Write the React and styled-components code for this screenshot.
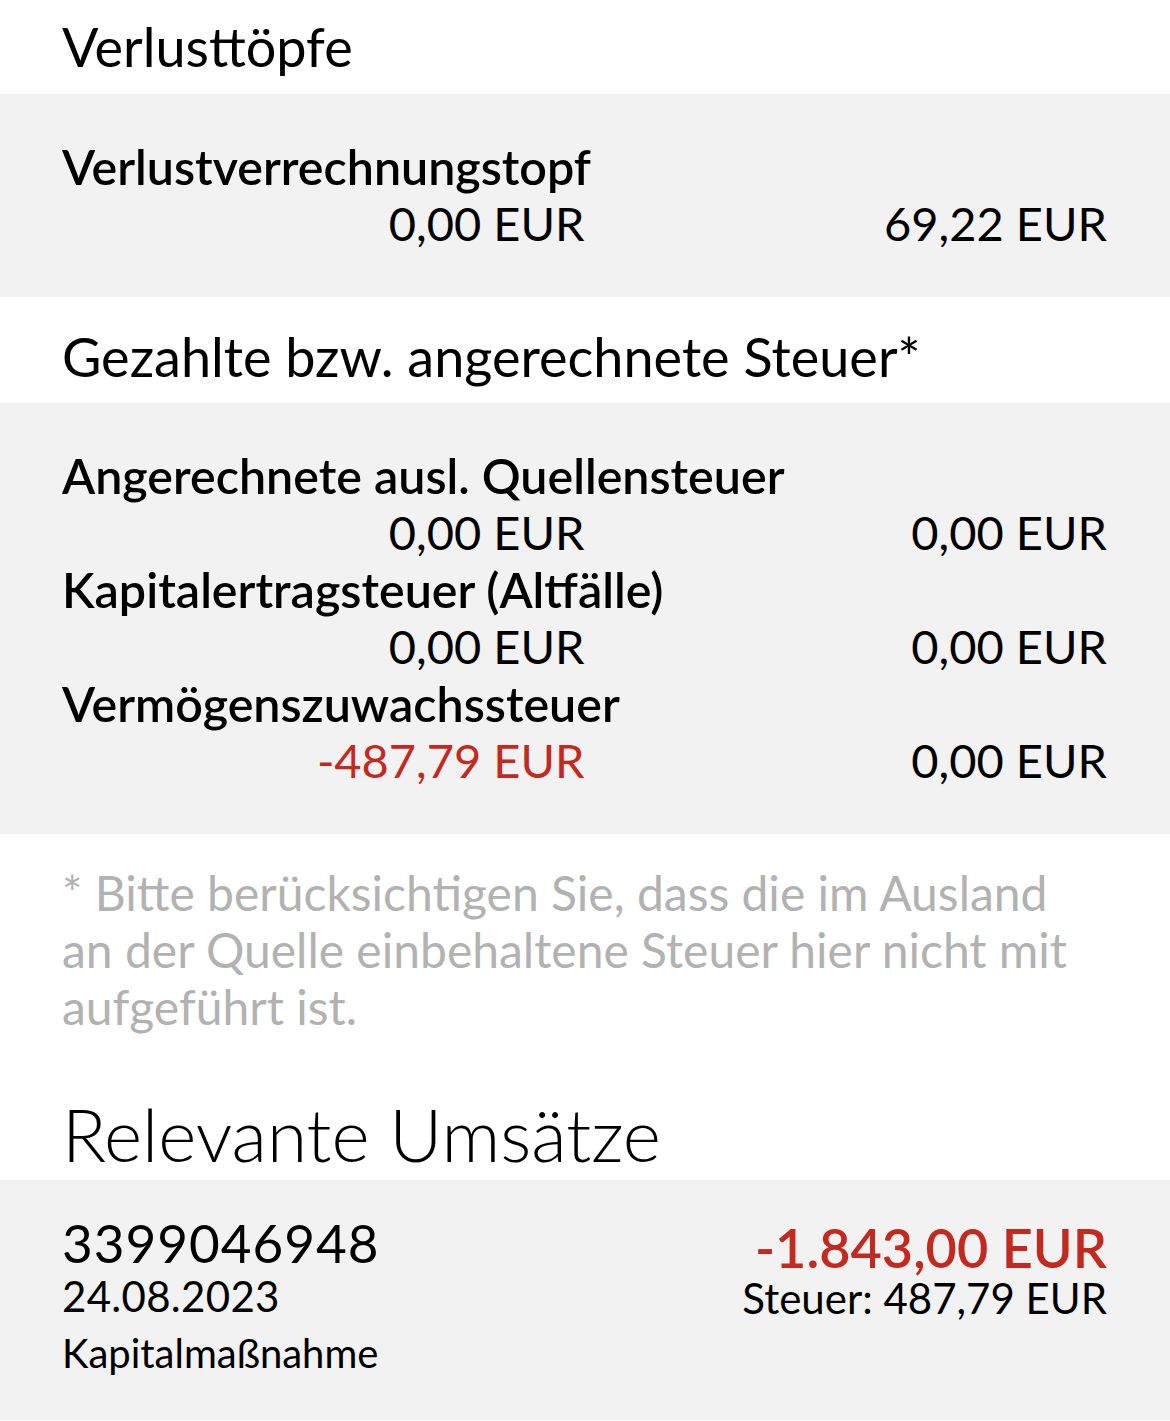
import React from 'react';
import styled, { createGlobalStyle } from 'styled-components';

const GlobalStyle = createGlobalStyle`
  html, body {
    margin: 0;
    padding: 0;
    background: #ffffff;
  }
  body {
    font-family: "Lato", "Open Sans", sans-serif;
    color: #000000;
    -webkit-font-smoothing: antialiased;
  }
`;

const Page = styled.div`
  width: 1170px;
  min-height: 1421px;
  background: #ffffff;
`;

const SectionTitle = styled.h2`
  margin: 0;
  padding: ${(p) => p.$top}px 63px ${(p) => p.$bottom}px 62px;
  font-size: ${(p) => p.$size}px;
  font-weight: ${(p) => p.$weight};
  line-height: ${(p) => p.$lh}px;
  color: #000000;
`;

const Panel = styled.section`
  background: #f2f2f2;
  padding: 44px 63px 45px 62px;
`;

const Label = styled.div`
  font-size: 48.4px;
  font-weight: 600;
  line-height: 57px;
`;

const ValueRow = styled.div`
  display: grid;
  grid-template-columns: 1fr 1fr;
`;

const Value = styled.div`
  text-align: right;
  font-size: 47px;
  font-weight: 400;
  line-height: 57px;
  color: ${(p) => (p.$negative ? '#c4291f' : '#000000')};
`;

const Footnote = styled.p`
  margin: 0;
  padding: 30px 63px 30px 62px;
  font-size: 48px;
  font-weight: 400;
  line-height: 57px;
  color: #b2b2b2;
`;

const Transaction = styled.section`
  background: #f2f2f2;
  padding: 33px 63px 38px 62px;
  display: flex;
  justify-content: space-between;
  align-items: flex-start;
`;

const TxColumn = styled.div`
  display: flex;
  flex-direction: column;
  align-items: ${(p) => (p.$right ? 'flex-end' : 'flex-start')};
`;

const TxId = styled.div`
  font-size: 53px;
  font-weight: 400;
  line-height: 60px;
  letter-spacing: 1px;
`;

const TxDate = styled.div`
  font-size: 42px;
  font-weight: 400;
  line-height: 46px;
  letter-spacing: 0.3px;
`;

const TxType = styled.div`
  margin-top: 6px;
  font-size: 40px;
  font-weight: 400;
  line-height: 57px;
`;

const TxAmount = styled.div`
  margin-top: 8px;
  font-size: 54px;
  font-weight: 600;
  line-height: 54px;
  color: #c4291f;
`;

const TxTax = styled.div`
  font-size: 42px;
  font-weight: 400;
  line-height: 46px;
`;

const losses = [
  { label: 'Verlustverrechnungstopf', left: '0,00 EUR', right: '69,22 EUR' },
];

const taxes = [
  { label: 'Angerechnete ausl. Quellensteuer', left: '0,00 EUR', right: '0,00 EUR' },
  { label: 'Kapitalertragsteuer (Altfälle)', left: '0,00 EUR', right: '0,00 EUR' },
  { label: 'Vermögenszuwachssteuer', left: '-487,79 EUR', right: '0,00 EUR' },
];

function Entries({ items }) {
  return (
    <Panel>
      {items.map((item) => (
        <React.Fragment key={item.label}>
          <Label>{item.label}</Label>
          <ValueRow>
            <Value $negative={item.left.startsWith('-')}>{item.left}</Value>
            <Value $negative={item.right.startsWith('-')}>{item.right}</Value>
          </ValueRow>
        </React.Fragment>
      ))}
    </Panel>
  );
}

export default function App() {
  return (
    <Page>
      <GlobalStyle />
      <SectionTitle $top={17} $bottom={17} $size={54} $weight={400} $lh={60}>
        Verlusttöpfe
      </SectionTitle>
      <Entries items={losses} />
      <SectionTitle $top={30} $bottom={16} $size={54} $weight={400} $lh={60}>
        Gezahlte bzw. angerechnete Steuer*
      </SectionTitle>
      <Entries items={taxes} />
      <Footnote>
        * Bitte berücksichtigen Sie, dass die im Ausland
        <br />
        an der Quelle einbehaltene Steuer hier nicht mit
        <br />
        aufgeführt ist.
      </Footnote>
      <SectionTitle $top={29} $bottom={6} $size={73} $weight={300} $lh={80}>
        Relevante Umsätze
      </SectionTitle>
      <Transaction>
        <TxColumn>
          <TxId>3399046948</TxId>
          <TxDate>24.08.2023</TxDate>
          <TxType>Kapitalmaßnahme</TxType>
        </TxColumn>
        <TxColumn $right>
          <TxAmount>-1.843,00 EUR</TxAmount>
          <TxTax>Steuer: 487,79 EUR</TxTax>
        </TxColumn>
      </Transaction>
    </Page>
  );
}
